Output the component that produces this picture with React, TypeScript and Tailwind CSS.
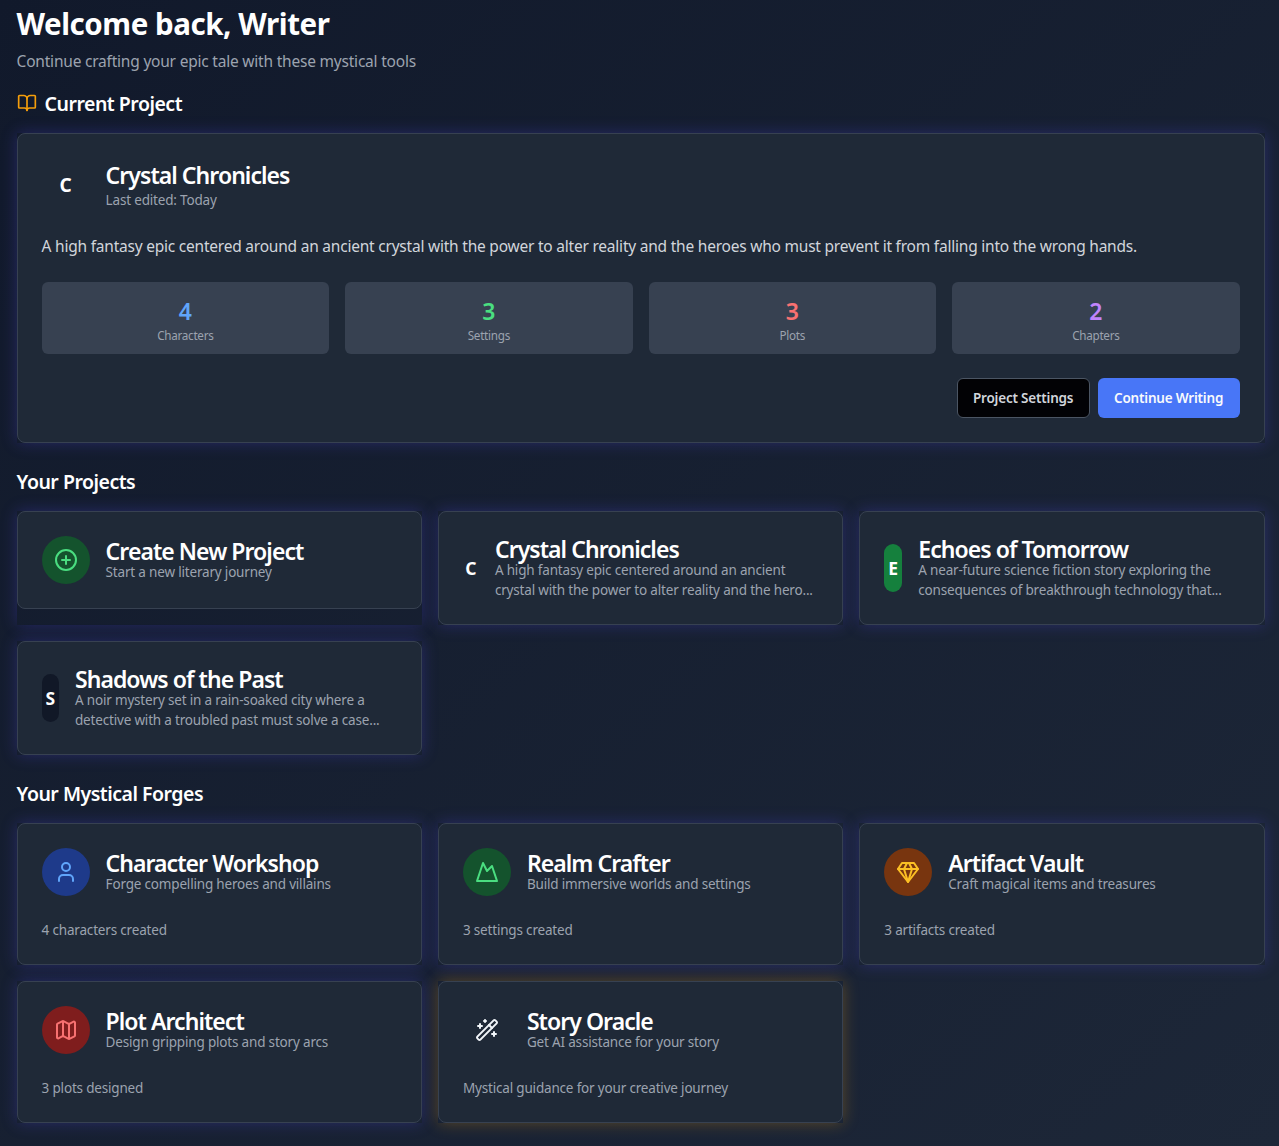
import type { ReactNode } from 'react';
import { BookOpen, CirclePlus, Map, User, WandSparkles } from 'lucide-react';

function Glow({ gold = false, children }: { gold?: boolean; children: ReactNode }) {
  return (
    <div className={gold ? 'shadow-[0_0_15px_rgba(245,158,11,0.3)]' : 'shadow-[0_0_15px_rgba(79,70,229,0.3)]'}>
      <div className="rounded-lg border border-[#374151] bg-[#1f2937] p-6">{children}</div>
    </div>
  );
}

function Title({ children, tall = false }: { children: ReactNode; tall?: boolean }) {
  return (
    <h3 className={`text-[23px] font-semibold tracking-[-0.95px] whitespace-nowrap text-white ${tall ? 'leading-8' : 'leading-6'}`}>
      <span className="relative top-px">{children}</span>
    </h3>
  );
}

function Muted({ children }: { children: ReactNode }) {
  return <p className="text-[13.5px] leading-5 tracking-[-0.18px] whitespace-nowrap text-[#9ca3af]">{children}</p>;
}

function Heading({ icon, children }: { icon?: ReactNode; children: ReactNode }) {
  return (
    <h2 className="mb-4 flex items-center text-[19.5px] leading-7 font-semibold tracking-[-0.5px] text-white">
      {icon}
      <span className="relative top-px">{children}</span>
    </h2>
  );
}

function Mountain() {
  return (
    <svg width="24" height="24" viewBox="0 0 24 24" fill="none" stroke="currentColor" strokeWidth="2" strokeLinecap="round" strokeLinejoin="round">
      <path d="m8 3 4 8 5-5 5 15H2L8 3z" />
    </svg>
  );
}

function Gem() {
  return (
    <svg width="24" height="24" viewBox="0 0 24 24" fill="none" stroke="currentColor" strokeWidth="2" strokeLinecap="round" strokeLinejoin="round">
      <path d="M6 3h12l4 6-10 13L2 9Z" />
      <path d="M11 3 8 9l4 13 4-13-3-6" />
      <path d="M2 9h20" />
    </svg>
  );
}

const stats = [
  { n: '4', label: 'Characters', color: 'text-[#60a5fa]' },
  { n: '3', label: 'Settings', color: 'text-[#4ade80]' },
  { n: '3', label: 'Plots', color: 'text-[#f87171]' },
  { n: '2', label: 'Chapters', color: 'text-[#c084fc]' },
];

const projects = [
  {
    letter: 'C',
    name: 'Crystal Chronicles',
    badge: 'w-4',
    lines: ['A high fantasy epic centered around an ancient', 'crystal with the power to alter reality and the hero...'],
  },
  {
    letter: 'E',
    name: 'Echoes of Tomorrow',
    badge: 'w-[18px] bg-[#15803d]',
    lines: ['A near-future science fiction story exploring the', 'consequences of breakthrough technology that...'],
  },
  {
    letter: 'S',
    name: 'Shadows of the Past',
    badge: 'w-[17.4px] bg-[#111827]',
    lines: ['A noir mystery set in a rain-soaked city where a', 'detective with a troubled past must solve a case...'],
  },
];

const forges = [
  {
    name: 'Character Workshop',
    desc: 'Forge compelling heroes and villains',
    foot: '4 characters created',
    badge: 'bg-[#1e3a8a] text-[#60a5fa]',
    icon: <User size={24} />,
  },
  {
    name: 'Realm Crafter',
    desc: 'Build immersive worlds and settings',
    foot: '3 settings created',
    badge: 'bg-[#14532d] text-[#4ade80]',
    icon: <Mountain />,
  },
  {
    name: 'Artifact Vault',
    desc: 'Craft magical items and treasures',
    foot: '3 artifacts created',
    badge: 'bg-[#78350f] text-[#fbbf24]',
    icon: <Gem />,
  },
  {
    name: 'Plot Architect',
    desc: 'Design gripping plots and story arcs',
    foot: '3 plots designed',
    badge: 'bg-[#7f1d1d] text-[#f87171]',
    icon: <Map size={24} />,
  },
  {
    name: 'Story Oracle',
    desc: 'Get AI assistance for your story',
    foot: 'Mystical guidance for your creative journey',
    badge: 'text-[#f1f5f9]',
    icon: <WandSparkles size={24} />,
    gold: true,
  },
];

export default function App() {
  return (
    <div className="h-[1146px] overflow-hidden bg-linear-to-br from-[#11192b] to-[#1d2738] pt-[5px] pr-[14.4px] pl-[16.6px] font-['Noto_Sans',sans-serif] text-white">
      <header className="mb-4">
        <h1 className="mb-2 text-[29.5px] leading-9 font-bold tracking-[-0.45px]">
          <span className="relative top-px">Welcome back, Writer</span>
        </h1>
        <p className="text-[15.5px] leading-6 tracking-[-0.21px] text-[#9ca3af]">Continue crafting your epic tale with these mystical tools</p>
      </header>

      <section className="mb-6">
        <Heading icon={<BookOpen size={20} className="mr-2 text-[#f59e0b]" />}>Current Project</Heading>
        <Glow>
          <div className="mb-6 flex items-center gap-4">
            <div className="flex size-12 items-center justify-center pt-0.5 text-[19px] font-bold">C</div>
            <div>
              <Title tall>Crystal Chronicles</Title>
              <Muted>Last edited: Today</Muted>
            </div>
          </div>
          <p className="mb-6 text-[15.5px] leading-6 tracking-[-0.22px] whitespace-nowrap text-[#d1d5db]">
            A high fantasy epic centered around an ancient crystal with the power to alter reality and the heroes who must prevent it from falling into the wrong hands.
          </p>
          <div className="mb-6 grid grid-cols-4 gap-4">
            {stats.map((s) => (
              <div key={s.label} className="rounded-md bg-[#374151] px-3 pt-[13px] pb-[11px] text-center">
                <div className={`text-[23px] leading-8 font-semibold ${s.color}`}>{s.n}</div>
                <div className="text-[11.7px] leading-4 tracking-[-0.28px] text-[#9ca3af]">{s.label}</div>
              </div>
            ))}
          </div>
          <div className="flex justify-end gap-2 text-[13.5px] font-semibold tracking-[-0.2px] whitespace-nowrap">
            <button className="h-10 w-[133px] rounded-md border border-[#4b5563] bg-[#020205] text-[#d1d5db]">Project Settings</button>
            <button className="h-10 w-[142px] rounded-md bg-[#4876f7] text-[#f8fafc]">Continue Writing</button>
          </div>
        </Glow>
      </section>

      <section className="mb-6">
        <Heading>Your Projects</Heading>
        <div className="grid grid-cols-3 gap-4">
          <Glow>
            <div className="flex items-center gap-4">
              <div className="flex size-12 items-center justify-center rounded-full bg-[#14532d] text-[#4ade80]">
                <CirclePlus size={24} />
              </div>
              <div>
                <Title>Create New Project</Title>
                <Muted>Start a new literary journey</Muted>
              </div>
            </div>
          </Glow>
          {projects.map((p) => (
            <Glow key={p.name}>
              <div className="flex items-center gap-4">
                <div className={`flex h-12 shrink-0 items-center justify-center rounded-full text-[17.5px] font-bold ${p.badge}`}>{p.letter}</div>
                <div>
                  <Title>{p.name}</Title>
                  <Muted>{p.lines[0]}</Muted>
                  <Muted>{p.lines[1]}</Muted>
                </div>
              </div>
            </Glow>
          ))}
        </div>
      </section>

      <section>
        <Heading>Your Mystical Forges</Heading>
        <div className="grid grid-cols-3 gap-4">
          {forges.map((f) => (
            <Glow key={f.name} gold={f.gold}>
              <div className="mb-6 flex items-center gap-4">
                <div className={`flex size-12 items-center justify-center rounded-full ${f.badge}`}>{f.icon}</div>
                <div>
                  <Title>{f.name}</Title>
                  <Muted>{f.desc}</Muted>
                </div>
              </div>
              <Muted>{f.foot}</Muted>
            </Glow>
          ))}
        </div>
      </section>
    </div>
  );
}
